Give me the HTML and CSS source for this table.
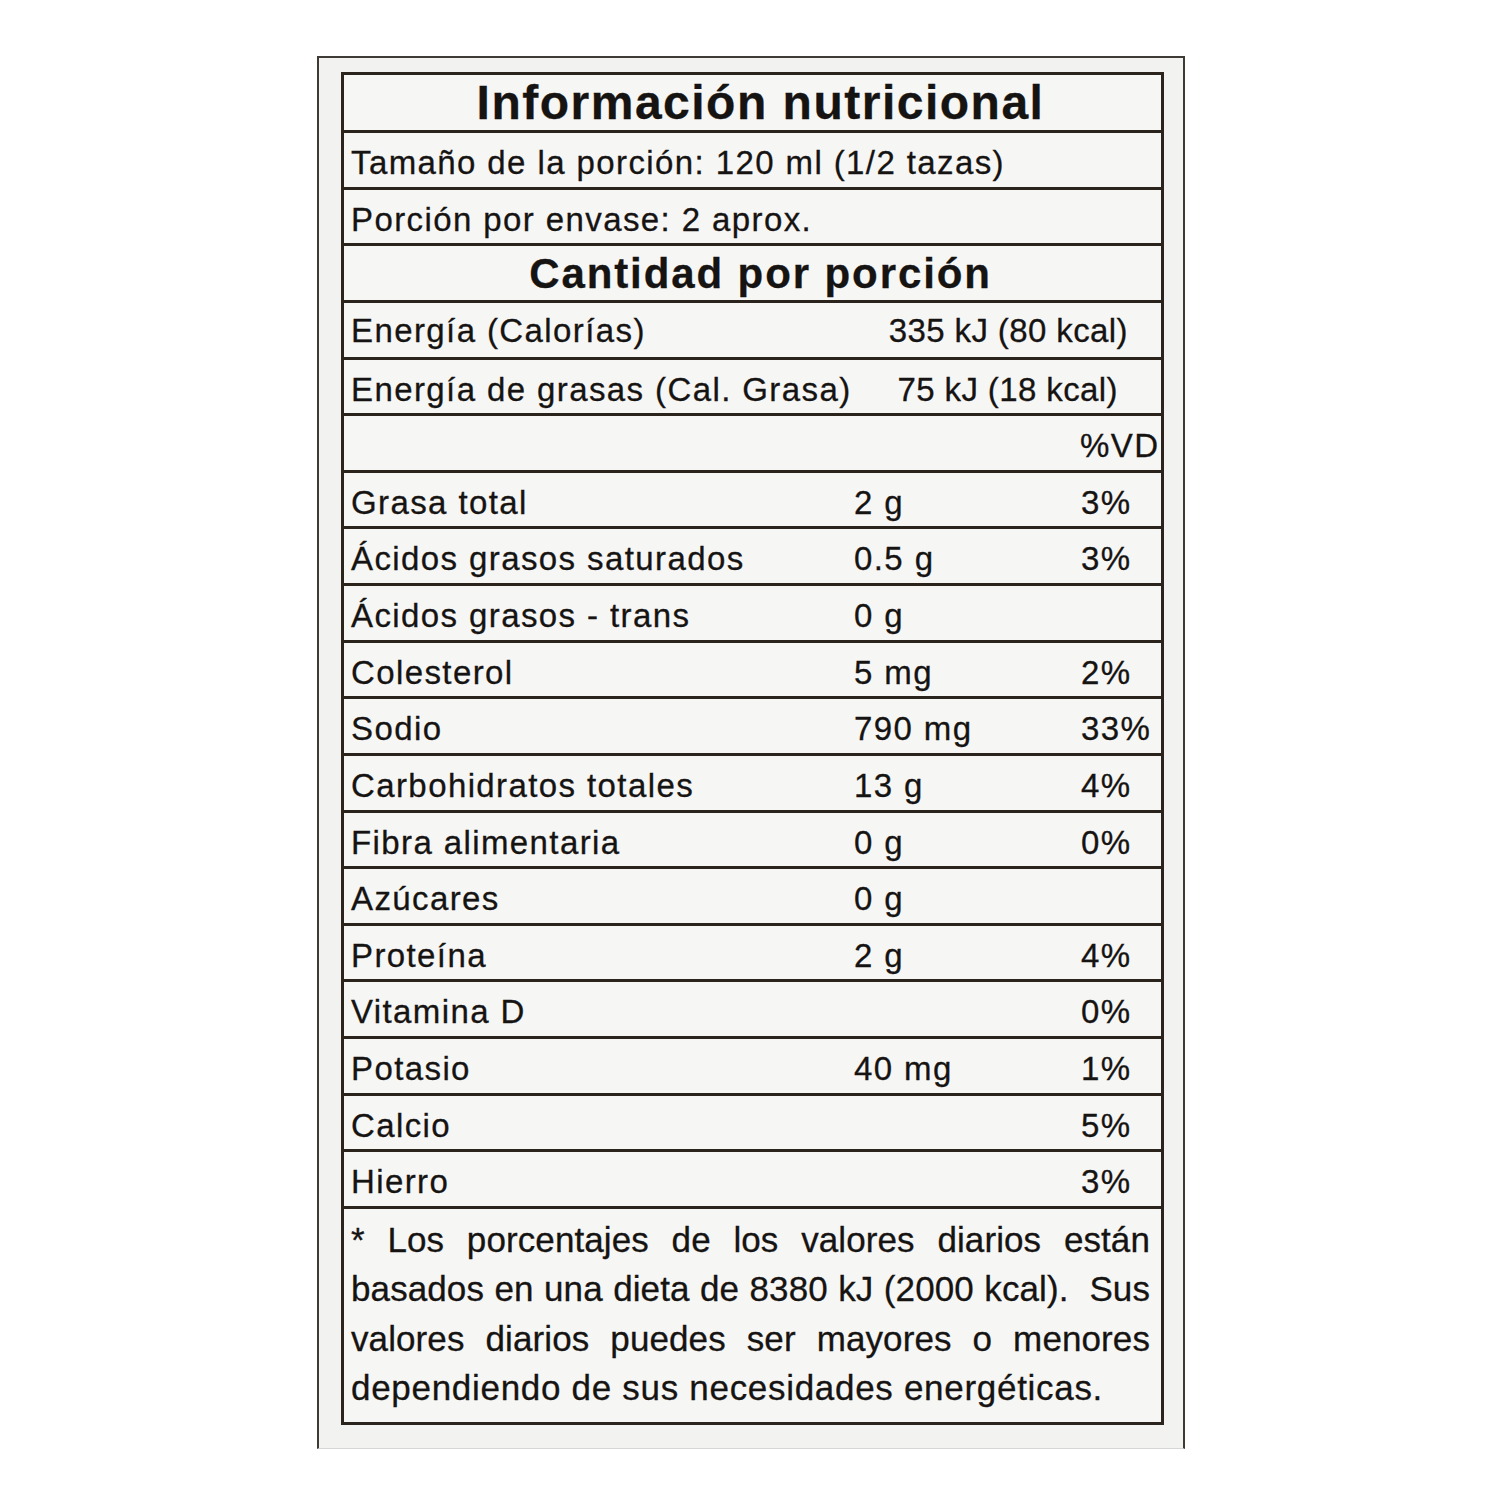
FILE: index.html
```html
<!DOCTYPE html>
<html lang="es">
<head>
<meta charset="utf-8">
<title>Información nutricional</title>
<link rel="stylesheet" href="styles.css">
</head>
<body>
<div class="card">
  <div class="panel">
    <div class="title">Información nutricional</div>
    <div class="row line">Tamaño de la porción: 120 ml (1/2 tazas)</div>
    <div class="row line">Porción por envase: 2 aprox.</div>
    <div class="row subtitle">Cantidad por porción</div>
    <div class="row energy energy-a"><span>Energía (Calorías)</span><span class="val">335 kJ (80 kcal)</span></div>
    <div class="row energy energy-b"><span>Energía de grasas (Cal. Grasa)</span><span class="val">75 kJ (18 kcal)</span></div>
    <div class="row grid"><span></span><span></span><span class="pct vd">%VD</span></div>
    <div class="row grid"><span>Grasa total</span><span>2 g</span><span class="pct">3%</span></div>
    <div class="row grid"><span>Ácidos grasos saturados</span><span>0.5 g</span><span class="pct">3%</span></div>
    <div class="row grid"><span>Ácidos grasos - trans</span><span>0 g</span><span class="pct"></span></div>
    <div class="row grid"><span>Colesterol</span><span>5 mg</span><span class="pct">2%</span></div>
    <div class="row grid"><span>Sodio</span><span>790 mg</span><span class="pct">33%</span></div>
    <div class="row grid"><span>Carbohidratos totales</span><span>13 g</span><span class="pct">4%</span></div>
    <div class="row grid"><span>Fibra alimentaria</span><span>0 g</span><span class="pct">0%</span></div>
    <div class="row grid"><span>Azúcares</span><span>0 g</span><span class="pct"></span></div>
    <div class="row grid"><span>Proteína</span><span>2 g</span><span class="pct">4%</span></div>
    <div class="row grid"><span>Vitamina D</span><span></span><span class="pct">0%</span></div>
    <div class="row grid"><span>Potasio</span><span>40 mg</span><span class="pct">1%</span></div>
    <div class="row grid"><span>Calcio</span><span></span><span class="pct">5%</span></div>
    <div class="row grid"><span>Hierro</span><span></span><span class="pct">3%</span></div>
    <div class="footnote">
      <span class="fl">* Los porcentajes de los valores diarios están</span>
      <span class="fl">basados en una dieta de 8380 kJ (2000 kcal). &nbsp;Sus</span>
      <span class="fl">valores diarios puedes ser mayores o menores</span>
      <span class="fl last">dependiendo de sus necesidades energéticas.</span>
    </div>
  </div>
</div>
</body>
</html>
```

FILE: styles.css
```css
html, body {
  margin: 0;
  padding: 0;
  background: #ffffff;
}

body {
  padding: 56px 0 0 317px;
  font-family: "Liberation Sans", Arial, sans-serif;
  color: #161412;
  -webkit-text-stroke: 0.3px #161412;
}

.card {
  box-sizing: border-box;
  width: 868px;
  background: #f2f2f1;
  border: 2px solid #3e3a36;
  border-bottom: 1px solid #d6d6d6;
  padding: 14px 19px 23px 22px;
}

.panel {
  box-sizing: border-box;
  width: 823px;
  background: #f6f6f5;
  border: 3px solid #2b241c;
}

.title {
  height: 55px;
  line-height: 55px;
  border-bottom: 3px solid #2b241c;
  text-align: center;
  font-weight: bold;
  font-size: 48px;
  letter-spacing: 1.5px;
  padding-left: 16px;
  white-space: nowrap;
}

.row {
  box-sizing: content-box;
  height: 47.63px;
  padding-top: 6px;
  line-height: 47.63px;
  border-bottom: 3px solid #2b241c;
  padding-left: 7px;
  font-size: 33px;
  letter-spacing: 1.4px;
  white-space: nowrap;
}

.subtitle {
  text-align: center;
  font-weight: bold;
  font-size: 42px;
  letter-spacing: 1.9px;
  padding-left: 16px;
  padding-top: 2px;
  height: 51.63px;
  line-height: 51.63px;
}

.energy {
  display: flex;
  justify-content: space-between;
}

.energy-a {
  padding-right: 33px;
  padding-top: 3px;
  height: 50.63px;
  line-height: 50.63px;
}

.energy-b {
  padding-right: 43px;
}

.val {
  letter-spacing: 0.4px;
}

.grid {
  display: grid;
  grid-template-columns: 503px 227px 1fr;
}

.vd {
  margin-left: -1px;
}

.footnote {
  height: 207px;
  padding: 6px 11px 0 7px;
  font-size: 35px;
  letter-spacing: 0.1px;
  line-height: 49.5px;
}

.fl {
  display: block;
  white-space: nowrap;
  text-align: justify;
  text-align-last: justify;
}

.fl.last {
  text-align-last: left;
  letter-spacing: 0.7px;
}
```
